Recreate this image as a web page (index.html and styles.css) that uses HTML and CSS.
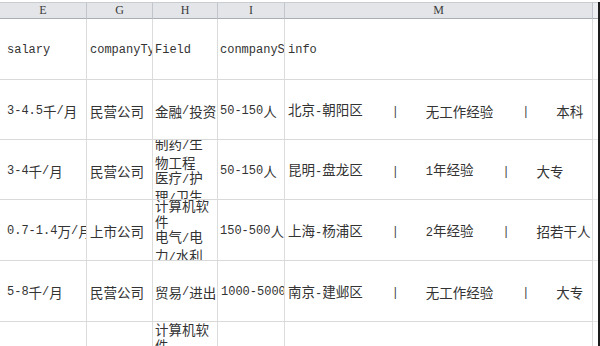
FILE: index.html
```html
<!DOCTYPE html>
<html lang="zh-CN">
<head>
<meta charset="utf-8">
<title>Sheet</title>
<link rel="stylesheet" href="styles.css">
</head>
<body>
<div class="sheet">
  <div class="hd">E</div>
  <div class="hd">G</div>
  <div class="hd">H</div>
  <div class="hd">I</div>
  <div class="hd">M</div>
  <div class="hd hd-end"></div>

  <div class="c c-e mono">salary</div>
  <div class="c c-g mono">companyType</div>
  <div class="c c-h mono">Field</div>
  <div class="c c-i mono">conmpanySize</div>
  <div class="c c-m mono">info</div>
  <div class="c c-end"></div>

  <div class="c c-e"><span class="m">3-4.5</span>千<span class="m">/</span>月</div>
  <div class="c c-g">民营公司</div>
  <div class="c c-h">金融<span class="m">/</span>投资</div>
  <div class="c c-i"><span class="m">50-150</span>人</div>
  <div class="c c-m"><span>北京<span class="m">-</span>朝阳区</span><span class="sep">|</span><span>无工作经验</span><span class="sep">|</span><span>本科</span></div>
  <div class="c c-end"></div>

  <div class="c c-e"><span class="m">3-4</span>千<span class="m">/</span>月</div>
  <div class="c c-g">民营公司</div>
  <div class="c c-h"><span>制药<span class="m">/</span>生<br>物工程<br>医疗<span class="m">/</span>护<br>理<span class="m">/</span>卫生</span></div>
  <div class="c c-i"><span class="m">50-150</span>人</div>
  <div class="c c-m"><span>昆明<span class="m">-</span>盘龙区</span><span class="sep">|</span><span><span class="m">1</span>年经验</span><span class="sep">|</span><span>大专</span></div>
  <div class="c c-end"></div>

  <div class="c c-e"><span class="m">0.7-1.4</span>万<span class="m">/</span>月</div>
  <div class="c c-g">上市公司</div>
  <div class="c c-h"><span>计算机软<br>件<br>电气<span class="m">/</span>电<br>力<span class="m">/</span>水利</span></div>
  <div class="c c-i"><span class="m">150-500</span>人</div>
  <div class="c c-m"><span>上海<span class="m">-</span>杨浦区</span><span class="sep">|</span><span><span class="m">2</span>年经验</span><span class="sep">|</span><span>招若干人</span></div>
  <div class="c c-end"></div>

  <div class="c c-e"><span class="m">5-8</span>千<span class="m">/</span>月</div>
  <div class="c c-g">民营公司</div>
  <div class="c c-h">贸易<span class="m">/</span>进出口</div>
  <div class="c c-i c-i-tight"><span class="m">1000-5000</span>人</div>
  <div class="c c-m"><span>南京<span class="m">-</span>建邺区</span><span class="sep">|</span><span>无工作经验</span><span class="sep">|</span><span>大专</span></div>
  <div class="c c-end"></div>

  <div class="c c-e"></div>
  <div class="c c-g"></div>
  <div class="c c-h c-top"><span>计算机软<br>件</span></div>
  <div class="c c-i"></div>
  <div class="c c-m"></div>
  <div class="c c-end"></div>
</div>
</body>
</html>
```

FILE: styles.css
```css
html, body {
  margin: 0;
  padding: 0;
  background: #ffffff;
  overflow: hidden;
}

body {
  width: 600px;
  height: 346px;
  font-family: "Noto Sans CJK SC", "Noto Sans", sans-serif;
  font-size: 13.5px;
  color: #333333;
}

.sheet {
  margin-top: 2px;
  display: grid;
  grid-template-columns: 87px 66px 65px 67px 308px 5px;
  grid-template-rows: 17px 61px 60px 60px 61px 61px 61px;
  border-right: 2px solid #1c1c1c;
  width: 598px;
}

.hd {
  box-sizing: border-box;
  background: #e3e5e9;
  border-top: 1px solid #c9ccd1;
  border-right: 1px solid #c2c6cc;
  border-bottom: 1px solid #a9aeb5;
  font-family: "Liberation Serif", "DejaVu Serif", serif;
  font-size: 12px;
  line-height: 15px;
  color: #3a3a3a;
  text-align: center;
}

.hd-end {
  background: #eceef1;
  border-right: none;
}

.c {
  box-sizing: border-box;
  border-right: 1px solid #dcdcdc;
  border-bottom: 1px solid #d9d9d9;
  display: flex;
  align-items: center;
  overflow: hidden;
  white-space: nowrap;
  line-height: 15.5px;
  padding-top: 4px;
}

.c-e { padding-left: 7px; }
.c-g { padding-left: 3px; }
.c-h { padding-left: 2px; }
.c-i { padding-left: 2px; }
.c-i-tight { padding-left: 3px; }
.c-m { padding-left: 3px; column-gap: 31px; }

.c-end {
  border-right: none;
  border-bottom: 1px solid #e6e6e6;
}

.c-top {
  align-items: flex-start;
  padding-top: 0;
}

.mono,
.m {
  font-family: "Liberation Mono", "DejaVu Sans Mono", monospace;
  font-size: 12px;
}

.sep {
  display: inline-block;
  width: 1px;
  font-family: "Liberation Sans", sans-serif;
  font-size: 12px;
  color: #444444;
}
```
